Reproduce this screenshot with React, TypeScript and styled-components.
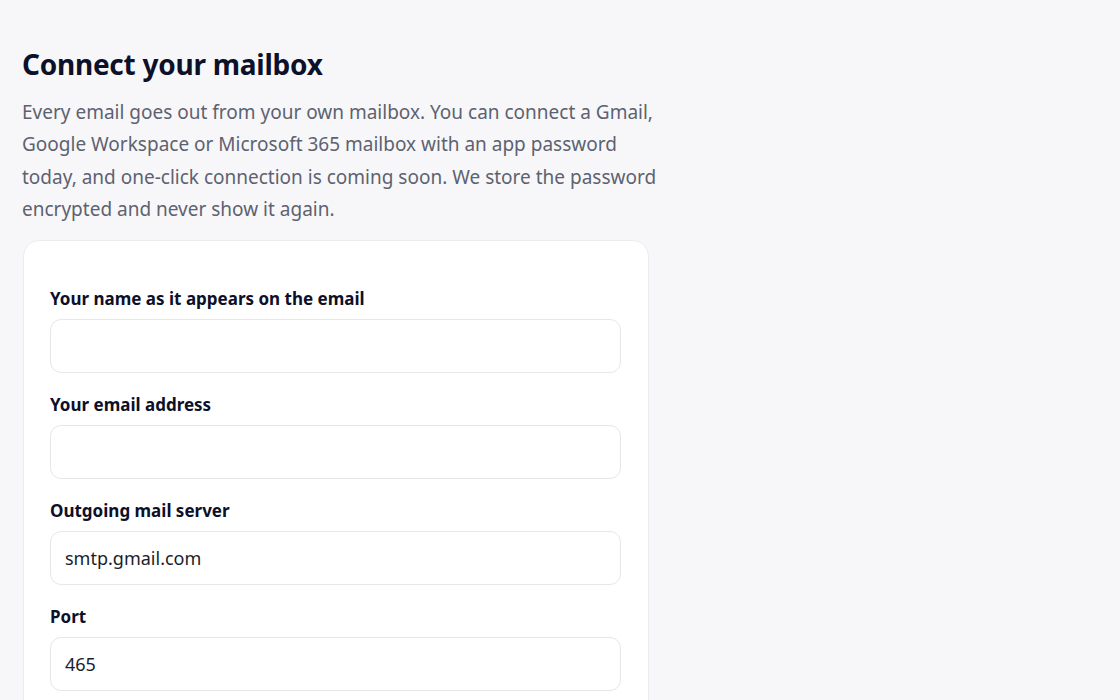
import React from "react";
import styled, { createGlobalStyle } from "styled-components";

const Global = createGlobalStyle`
  html, body { margin: 0; padding: 0; background: #f7f7f9; }
  body { font-family: "Noto Sans", "Open Sans", sans-serif; }
  * { box-sizing: border-box; }
`;

const Page = styled.main`
  padding: 44px 22px 40px 22px;
  min-height: 700px;
`;

const Column = styled.div`
  width: 642px;
  display: flex;
  flex-direction: column;
`;

const Title = styled.h1`
  margin: 0 0 12px 0;
  font-size: 28px;
  line-height: 40px;
  font-weight: 700;
  color: #0c1029;
  letter-spacing: -0.25px;
`;

const Lead = styled.p`
  margin: 0 0 14px 0;
  font-size: 19px;
  line-height: 32.4px;
  color: #5d6270;
`;

const Card = styled.section`
  width: 626px;
  margin-left: 1px;
  background: #ffffff;
  border: 1px solid #ebecf0;
  border-radius: 16px;
  padding: 46px 27px 28px 26px;
  display: flex;
  flex-direction: column;
  gap: 20px;
`;

const Field = styled.div`
  display: flex;
  flex-direction: column;
  gap: 8px;
`;

const Label = styled.label`
  font-size: 17px;
  line-height: 24px;
  font-weight: 700;
  color: #0c1029;
`;

const Input = styled.input`
  height: 54px;
  width: 100%;
  border: 1px solid #e6e7eb;
  border-radius: 11px;
  background: #fff;
  padding: 0 14px;
  font-family: inherit;
  font-size: 18px;
  color: #1a1d2b;
  outline: none;
`;

const fields = [
  { label: "Your name as it appears on the email", value: "" },
  { label: "Your email address", value: "" },
  { label: "Outgoing mail server", value: "smtp.gmail.com" },
  { label: "Port", value: "465" },
];

export default function App() {
  return (
    <>
      <Global />
      <Page>
        <Column>
          <Title>Connect your mailbox</Title>
          <Lead>
            Every email goes out from your own mailbox. You can connect a Gmail,
            Google Workspace or Microsoft 365 mailbox with an app password
            today, and one-click connection is coming soon. We store the
            password encrypted and never show it again.
          </Lead>
          <Card>
            {fields.map((f) => (
              <Field key={f.label}>
                <Label>{f.label}</Label>
                <Input defaultValue={f.value} />
              </Field>
            ))}
          </Card>
        </Column>
      </Page>
    </>
  );
}
